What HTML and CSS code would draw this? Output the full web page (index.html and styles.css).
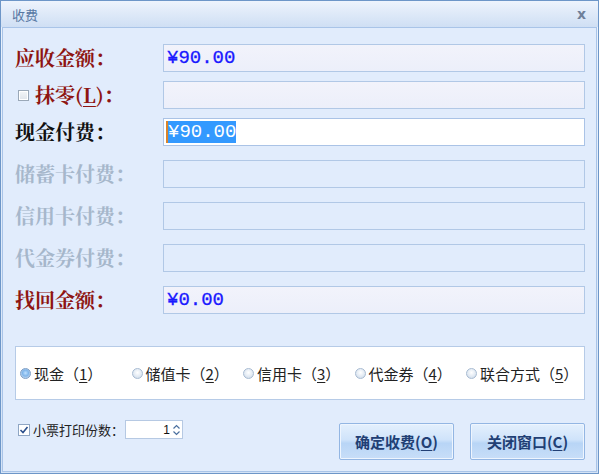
FILE: index.html
```html
<!DOCTYPE html>
<html>
<head>
<meta charset="utf-8">
<link rel="stylesheet" href="styles.css">
</head>
<body>
<div class="window">
  <div class="titlebar">
    <span class="title">收费</span>
    <span class="close">x</span>
  </div>
  <div class="panel">
    <div class="rows top">
      <div class="row">
        <div class="label red">应收金额：</div>
        <div class="field ro"><span class="val">¥90.00</span></div>
      </div>
      <div class="row">
        <div class="label red"><span class="cb"></span>抹零(<u>L</u>)：</div>
        <div class="field ro"></div>
      </div>
      <div class="row">
        <div class="label black">现金付费：</div>
        <div class="field active"><span class="sel">¥90.00</span></div>
      </div>
    </div>
    <div class="rows rest">
      <div class="row">
        <div class="label gray">储蓄卡付费：</div>
        <div class="field dis"></div>
      </div>
      <div class="row">
        <div class="label gray">信用卡付费：</div>
        <div class="field dis"></div>
      </div>
      <div class="row">
        <div class="label gray">代金券付费：</div>
        <div class="field dis"></div>
      </div>
      <div class="row">
        <div class="label red">找回金额：</div>
        <div class="field ro"><span class="val">¥0.00</span></div>
      </div>
    </div>
    <div class="group">
      <label class="radio"><span class="dot on"></span>现金<span class="p">（</span><u>1</u><span class="p">）</span></label>
      <label class="radio"><span class="dot"></span>储值卡<span class="p">（</span><u>2</u><span class="p">）</span></label>
      <label class="radio"><span class="dot"></span>信用卡<span class="p">（</span><u>3</u><span class="p">）</span></label>
      <label class="radio"><span class="dot"></span>代金券<span class="p">（</span><u>4</u><span class="p">）</span></label>
      <label class="radio"><span class="dot"></span>联合方式<span class="p">（</span><u>5</u><span class="p">）</span></label>
    </div>
    <div class="bottom">
      <div class="print">
        <span class="check"><svg width="10" height="10" viewBox="0 0 10 10"><path d="M1.5 5 L4 7.5 L8.5 2" fill="none" stroke="#2b4f8c" stroke-width="1.6"/></svg></span>
        <span class="ptext">小票打印份数：</span>
        <div class="spin"><span class="num">1</span><span class="arrows"><svg width="7" height="12" viewBox="0 0 7 12"><path d="M0.5 4.5 L3.5 1.5 L6.5 4.5" fill="none" stroke="#4a6f9e" stroke-width="1.2"/><path d="M0.5 7.5 L3.5 10.5 L6.5 7.5" fill="none" stroke="#4a6f9e" stroke-width="1.2"/></svg></span></div>
      </div>
      <div class="buttons">
        <button class="btn">确定收费(<u>O</u>)</button>
        <button class="btn">关闭窗口(<u>C</u>)</button>
      </div>
    </div>
  </div>
</div>
</body>
</html>
```
FILE: styles.css
```css
* { box-sizing: border-box; }
html, body { margin: 0; padding: 0; }
body {
  width: 599px;
  height: 474px;
  font-family: "Noto Sans CJK SC", sans-serif;
  background: #dfeafb;
}
.window {
  width: 599px;
  height: 474px;
  border: 1px solid #6d96c8;
  display: flex;
  flex-direction: column;
  background: linear-gradient(#eaf2fd, #d4e3f6);
}
.titlebar {
  height: 26px;
  display: flex;
  align-items: center;
  justify-content: space-between;
  padding: 0 12px 0 11px;
  background: linear-gradient(#eef4fd 0%, #e1ebf9 40%, #cfdff4 100%);
  flex: none;
}
.title {
  font-size: 13px;
  color: #5878a3;
  font-family: "Noto Sans CJK SC", sans-serif;
}
.close {
  font-family: "DejaVu Sans", sans-serif;
  font-weight: bold;
  font-size: 14px;
  color: #6f809a;
}
.panel {
  flex: 1;
  margin: 0 1px 1px 1px;
  border: 1px solid #a9c4e8;
  background: #e1ecfc;
  padding: 16px 11px 0 12px;
  display: flex;
  flex-direction: column;
}
.rows { display: flex; flex-direction: column; }
.rows.top { gap: 9px; }
.rows.rest { gap: 14px; margin-top: 14px; }
.row { display: flex; align-items: center; height: 28px; }
.label {
  width: 148px;
  flex: none;
  font-family: "Noto Serif CJK SC", "Noto Sans CJK SC", serif;
  font-weight: bold;
  font-size: 20px;
  line-height: 28px;
  display: flex;
  align-items: center;
  white-space: nowrap;
}
.label u { text-decoration-thickness: 1px; text-underline-offset: 3px; }
.red { color: #8e1512; }
.black { color: #111; }
.gray { color: #a6b7cb; }
.cb {
  width: 11px;
  height: 11px;
  border: 1px solid #9aa8b8;
  background: linear-gradient(#f4f6f8, #dfe4ea);
  margin: 0 6px 0 3px;
  box-shadow: inset 0 0 0 1px #fff;
}
.field {
  flex: 1;
  height: 28px;
  border: 1px solid #b1c8e6;
  display: flex;
  align-items: center;
  padding-left: 3px;
  font-family: "Liberation Mono", monospace;
  font-size: 19px;
}
.field.ro { background: linear-gradient(#f2f3fb, #eceffa); }
.field.dis { background: #e1ecfc; }
.field.active { background: #fff; border-color: #aac3e6; }
.val { color: #1a1aff; -webkit-text-stroke: 0.3px #1a1aff; }
.sel {
  background: #3399ff;
  color: #fff;
  border-left: 2px solid #d9842b;
  line-height: 22px;
  margin-left: -1px;
}
.group {
  margin-top: 32px;
  height: 54px;
  background: #fff;
  border: 1px solid #b6cbe7;
  display: flex;
  align-items: center;
  padding-left: 4px;
}
.radio {
  width: 111.5px;
  flex: none;
  display: flex;
  align-items: center;
  font-size: 15px;
  color: #222;
  white-space: nowrap;
}
.radio .p { display: inline-block; width: 15px; text-align: center; }
.radio u { text-underline-offset: 2px; }
.dot {
  width: 11px;
  height: 11px;
  border-radius: 50%;
  border: 1px solid #a8bbd2;
  background: radial-gradient(circle at 50% 40%, #ffffff 0%, #dfe8f2 60%, #c6d3e2 100%);
  margin-right: 3px;
  flex: none;
}
.dot.on {
  border-color: #7f9fc6;
  background: radial-gradient(circle at 50% 45%, #bfe0ff 0%, #7fb5ea 45%, #c9dbef 80%, #e6eef8 100%);
}
.bottom {
  display: flex;
  justify-content: space-between;
  margin-top: 20px;
}
.print {
  display: flex;
  align-items: center;
  height: 19px;
  padding-left: 3px;
}
.check {
  width: 12px;
  height: 12px;
  border: 1px solid #8fa6c4;
  background: #fff;
  display: flex;
  align-items: center;
  justify-content: center;
  margin-right: 3px;
}
.ptext { font-size: 13px; color: #222; width: 92px; }
.spin {
  width: 58px;
  height: 19px;
  border: 1px solid #b6c9e3;
  background: #fff;
  display: flex;
  align-items: center;
  justify-content: flex-end;
  padding-right: 2px;
}
.num { font-family: "Liberation Sans", sans-serif; font-size: 12px; color: #111; margin-right: 3px; }
.arrows { display: flex; }
.buttons {
  display: flex;
  gap: 16px;
  padding-top: 3px;
}
.btn {
  width: 115px;
  height: 37px;
  border: 1px solid #93b6e3;
  border-radius: 2px;
  background: linear-gradient(#e4f0fd 0%, #cfe3fa 45%, #b8d5f6 55%, #c8def8 100%);
  box-shadow: inset 0 0 0 1px #eef5fe;
  font-family: "Noto Sans CJK SC", sans-serif;
  font-weight: bold;
  font-size: 15px;
  color: #213f74;
  padding: 0;
}
.btn u { text-underline-offset: 2px; }
```
